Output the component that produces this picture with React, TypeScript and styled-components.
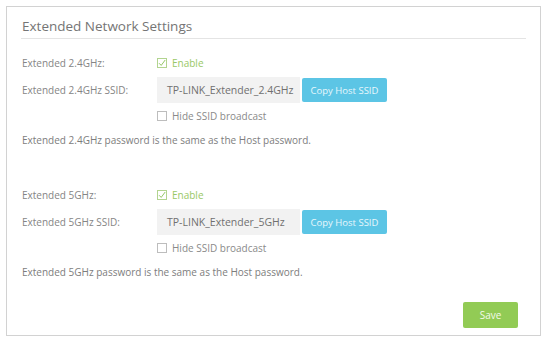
import * as React from 'react'
import styled, { createGlobalStyle } from 'styled-components'

const Global = createGlobalStyle`
  html, body {
    margin: 0;
    padding: 0;
    background: #ffffff;
  }
  body {
    font-family: "Open Sans", "DejaVu Sans", sans-serif;
    color: #808080;
  }
`

const Panel = styled.div`
  box-sizing: border-box;
  width: 535px;
  height: 330px;
  margin: 6px 0 0 6px;
  border: 1px solid #d2d2d2;
  padding: 0 14px;
  display: flex;
  flex-direction: column;
`

const Title = styled.div`
  padding: 10px 0 3px 1px;
  line-height: 18px;
  font-size: 13.5px;
  color: #757575;
  border-bottom: 1px solid #e4e4e4;
`

const Section = styled.div<{ $top: number }>`
  margin-top: ${(p) => p.$top}px;
  display: flex;
  flex-direction: column;
`

const Row = styled.div<{ $h: number }>`
  display: grid;
  grid-template-columns: 136px 1fr;
  align-items: center;
  height: ${(p) => p.$h}px;
  font-size: 10px;
`

const Label = styled.div`
  padding-left: 1px;
  color: #858585;
`

const Field = styled.div`
  display: flex;
  align-items: center;
  gap: 2px;
`

const Check = styled.label<{ $green?: boolean }>`
  display: flex;
  align-items: center;
  gap: 5px;
  color: ${(p) => (p.$green ? '#9ac866' : '#8a8a8a')};
`

const Box = styled.span<{ $green?: boolean }>`
  box-sizing: border-box;
  width: 10px;
  height: 10px;
  border: 1px solid ${(p) => (p.$green ? '#b2d48f' : '#bdbdbd')};
  display: inline-flex;
  align-items: center;
  justify-content: center;
  background: #fff;
`

const Input = styled.div`
  box-sizing: border-box;
  width: 143px;
  height: 26px;
  background: #f2f2f2;
  padding-left: 10px;
  display: flex;
  align-items: center;
  white-space: nowrap;
  overflow: hidden;
  color: #707070;
  font-size: 10.5px;
`

const CopyButton = styled.button`
  box-sizing: border-box;
  width: 85px;
  height: 24px;
  border: none;
  border-radius: 2px;
  background: #5cc5e5;
  color: #e8f7fc;
  font-family: inherit;
  font-size: 9.5px;
  padding: 0;
`

const Note = styled.div`
  height: 24px;
  display: flex;
  align-items: center;
  padding-left: 1px;
  font-size: 10px;
  color: #7d7d7d;
`

const Footer = styled.div`
  margin-top: 18px;
  display: flex;
  justify-content: flex-end;
  padding-right: 8px;
`

const SaveButton = styled.button`
  width: 55px;
  height: 26px;
  border: none;
  border-radius: 2px;
  background: #92cb55;
  color: #f2faea;
  font-family: inherit;
  font-size: 10px;
  padding: 0;
`

function Tick() {
  return (
    <svg width="8" height="8" viewBox="0 0 8 8">
      <path d="M1 4.2 L3.2 6.4 L7.2 1" fill="none" stroke="#94c766" strokeWidth="1" />
    </svg>
  )
}

function Band({ band, ssid, top }: { band: string; ssid: string; top: number }) {
  return (
    <Section $top={top}>
      <Row $h={26}>
        <Label>Extended {band}:</Label>
        <Check $green>
          <Box $green>
            <Tick />
          </Box>
          Enable
        </Check>
      </Row>
      <Row $h={28}>
        <Label>Extended {band} SSID:</Label>
        <Field>
          <Input>{ssid}</Input>
          <CopyButton>Copy Host SSID</CopyButton>
        </Field>
      </Row>
      <Row $h={24}>
        <span />
        <Check>
          <Box />
          Hide SSID broadcast
        </Check>
      </Row>
      <Note>Extended {band} password is the same as the Host password.</Note>
    </Section>
  )
}

export default function App() {
  return (
    <>
      <Global />
      <Panel>
        <Title>Extended Network Settings</Title>
        <Band band="2.4GHz" ssid="TP-LINK_Extender_2.4GHz" top={11} />
        <Band band="5GHz" ssid="TP-LINK_Extender_5GHz" top={30} />
        <Footer>
          <SaveButton>Save</SaveButton>
        </Footer>
      </Panel>
    </>
  )
}
